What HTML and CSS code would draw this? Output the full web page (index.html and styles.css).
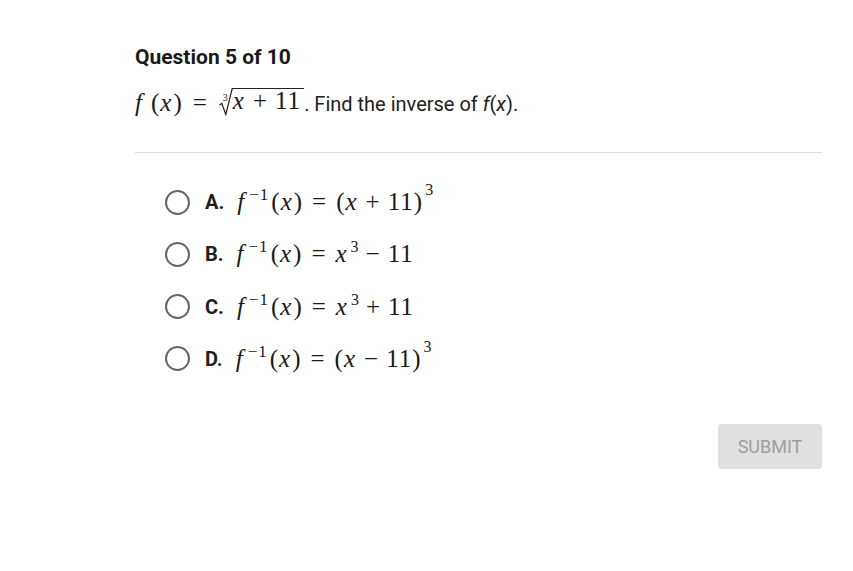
FILE: index.html
```html
<!DOCTYPE html>
<html>
<head>
<meta charset="utf-8">
<link rel="stylesheet" href="styles.css">
</head>
<body>
<div class="page">
  <h1 class="title">Question 5 of 10</h1>
  <p class="prompt"><span class="math"><i>f</i><span class="sp"></span>(<i>x</i>)<span class="op op-wide">=</span><span class="root"><sup class="idx">3</sup><svg class="rad" width="14" height="28" viewBox="0 0 14 28"><path d="M0.5 17 L2.8 15.5 L6.8 26.5 L13.2 0.6 L14 0.6" fill="none" stroke="#222" stroke-width="1.2" stroke-linejoin="miter"/></svg><span class="radicand"><i>x</i><span class="bin">+</span>11</span></span></span>. Find the inverse of <i class="fi">f</i>(<i class="fi">x</i>).</p>
  <hr class="rule">
  <div class="options">
    <label class="opt"><span class="radio"></span><b class="letter">A.</b><span class="math"><i>f</i><sup class="inv">−1</sup>(<i>x</i>)<span class="op">=</span>(<i>x</i><span class="bin">+</span>11)<sup class="hi">3</sup></span></label>
    <label class="opt"><span class="radio"></span><b class="letter">B.</b><span class="math"><i>f</i><sup class="inv">−1</sup>(<i>x</i>)<span class="op">=</span><i>x</i><sup>3</sup><span class="bin">−</span>11</span></label>
    <label class="opt"><span class="radio"></span><b class="letter">C.</b><span class="math"><i>f</i><sup class="inv">−1</sup>(<i>x</i>)<span class="op">=</span><i>x</i><sup>3</sup><span class="bin">+</span>11</span></label>
    <label class="opt"><span class="radio"></span><b class="letter">D.</b><span class="math"><i>f</i><sup class="inv">−1</sup>(<i>x</i>)<span class="op">=</span>(<i>x</i><span class="bin">−</span>11)<sup class="hi">3</sup></span></label>
  </div>
  <div class="actions"><button class="submit">SUBMIT</button></div>
</div>
</body>
</html>
```
FILE: styles.css
```css
html, body { margin: 0; padding: 0; background: #fff; }
body { font-family: Roboto, "Liberation Sans", sans-serif; color: #212121; }
.page { width: 687px; margin-left: 135px; padding-top: 43px; }
.title { font-size: 21px; font-weight: 700; margin: 0; line-height: 28px; color: #1a1a1a; }
.prompt { font-size: 20px; margin: 17px 0 0 0; line-height: 30px; display: flex; align-items: baseline; white-space: pre; }
.math { font-family: "Liberation Serif", "DejaVu Serif", serif; font-size: 25px; color: #1a1a1a; letter-spacing: 1px; }
.math i { font-style: italic; padding-right: 1px; }
.math sup { font-size: 16px; vertical-align: 10px; line-height: 0; margin-left: 2px; letter-spacing: 0; }
.math sup.inv { font-size: 17px; margin-left: 3px; margin-right: 2px; letter-spacing: 1px; }
.math sup.hi { vertical-align: 15px; }
.sp { display: inline-block; width: 7px; }
.op { padding: 0 9px; }
.op-wide { padding: 0 10px; }
.bin { padding: 0 7px; }
.fi { font-style: italic; }
.root { display: inline-flex; align-items: flex-start; position: relative; margin-left: 1px; vertical-align: -5px; }
.idx { font-size: 10px !important; position: absolute; left: 4px; top: 5px; vertical-align: baseline !important; line-height: 1 !important; margin: 0 !important; }
.rad { display: block; flex: none; }
.radicand { border-top: 1.2px solid #222; line-height: 24px; padding-right: 3px; }
.rule { border: 0; border-top: 1px solid #dcdcdc; margin: 33px 0 0 0; }
.options { display: flex; flex-direction: column; gap: 22.3px; padding-left: 30px; margin-top: 34px; }
.opt { display: flex; align-items: center; height: 30px; }
.radio { width: 21px; height: 21px; border: 2px solid #666; border-radius: 50%; margin-right: 15px; box-sizing: content-box; }
.letter { font-size: 20px; font-weight: 700; margin-right: 13px; }
.actions { display: flex; justify-content: flex-end; margin-top: 50px; }
.submit { width: 104px; height: 45px; border: 0; border-radius: 4px; background: #e0e0e0; color: #9e9e9e; font-family: Roboto, sans-serif; font-size: 18px; }
```
